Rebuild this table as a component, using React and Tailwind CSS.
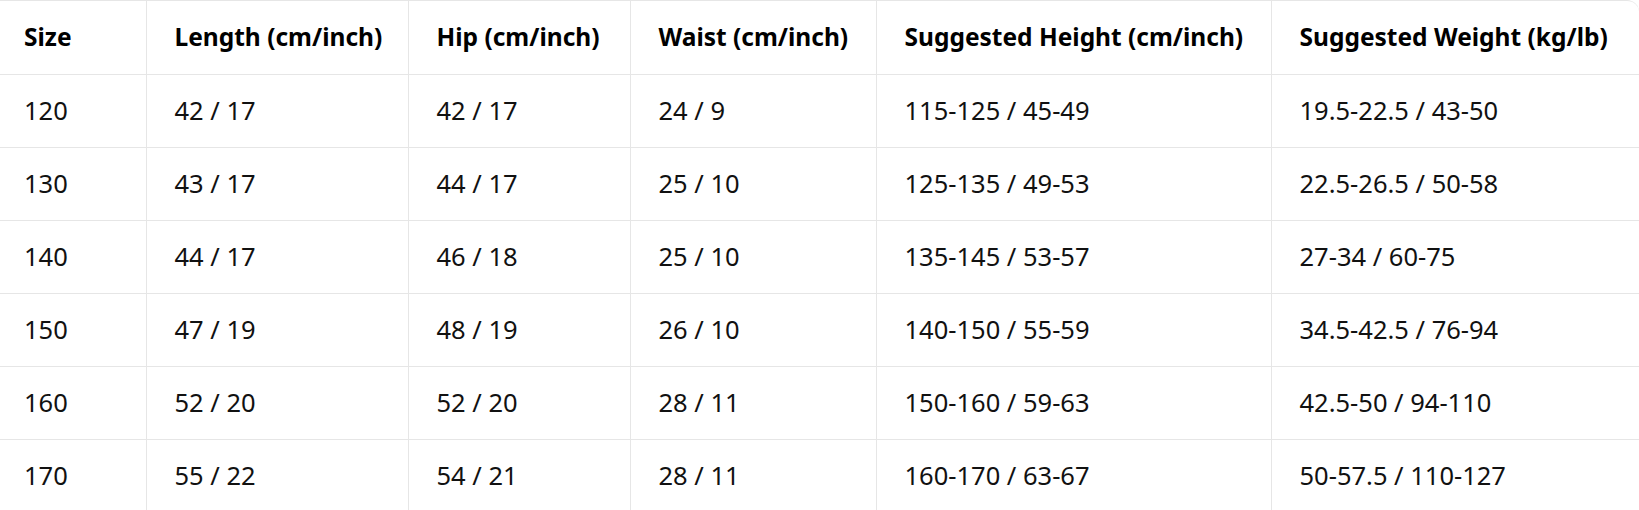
const headers = [
  'Size',
  'Length (cm/inch)',
  'Hip (cm/inch)',
  'Waist (cm/inch)',
  'Suggested Height (cm/inch)',
  'Suggested Weight (kg/lb)',
]

const rows = [
  ['120', '42 / 17', '42 / 17', '24 / 9', '115-125 / 45-49', '19.5-22.5 / 43-50'],
  ['130', '43 / 17', '44 / 17', '25 / 10', '125-135 / 49-53', '22.5-26.5 / 50-58'],
  ['140', '44 / 17', '46 / 18', '25 / 10', '135-145 / 53-57', '27-34 / 60-75'],
  ['150', '47 / 19', '48 / 19', '26 / 10', '140-150 / 55-59', '34.5-42.5 / 76-94'],
  ['160', '52 / 20', '52 / 20', '28 / 11', '150-160 / 59-63', '42.5-50 / 94-110'],
  ['170', '55 / 22', '54 / 21', '28 / 11', '160-170 / 63-67', '50-57.5 / 110-127'],
]

export default function App() {
  return (
    <div className="h-[510px] w-[1639px] overflow-hidden bg-white font-['Noto_Sans',sans-serif]">
      <div className="overflow-hidden rounded-tr-xl border-t border-[#e6e6e6]">
        <table className="w-full table-fixed border-collapse text-left text-[25.5px] text-[#111]">
          <colgroup>
            <col className="w-[146px]" />
            <col className="w-[262px]" />
            <col className="w-[222px]" />
            <col className="w-[246px]" />
            <col className="w-[395px]" />
            <col />
          </colgroup>
          <thead>
            <tr className="h-[73px] border-b border-[#e6e6e6]">
              {headers.map((h, i) => (
                <th
                  key={h}
                  className={`whitespace-nowrap text-[24.5px] font-bold text-black ${
                    i === 0 ? 'pl-6' : 'border-l border-[#e6e6e6] pl-7'
                  }`}
                >
                  {h}
                </th>
              ))}
            </tr>
          </thead>
          <tbody>
            {rows.map((r) => (
              <tr key={r[0]} className="h-[73px] border-b border-[#e6e6e6]">
                {r.map((c, i) => (
                  <td
                    key={i}
                    className={`whitespace-nowrap font-normal ${
                      i === 0 ? 'pl-6' : 'border-l border-[#e6e6e6] pl-7'
                    }`}
                  >
                    {c}
                  </td>
                ))}
              </tr>
            ))}
          </tbody>
        </table>
      </div>
    </div>
  )
}
